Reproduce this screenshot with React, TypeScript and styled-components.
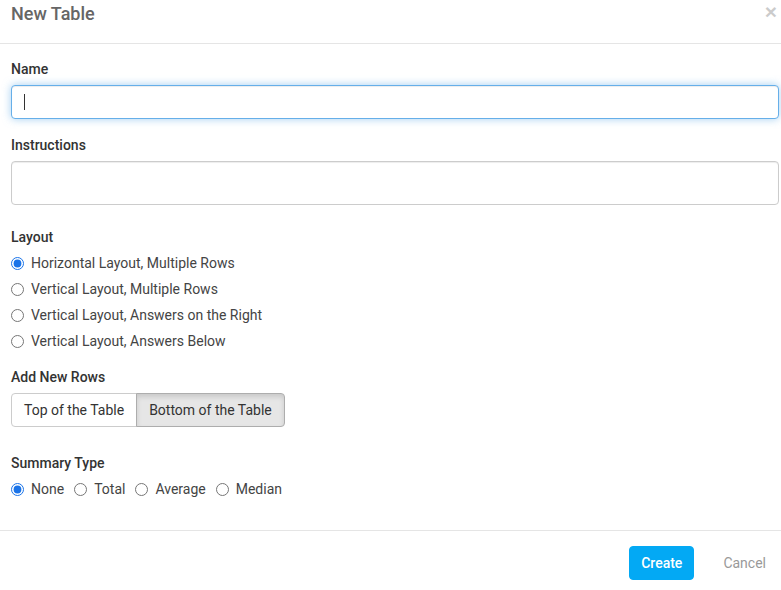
import React from "react";
import styled, { createGlobalStyle } from "styled-components";

const Global = createGlobalStyle`
  html, body { margin: 0; padding: 0; background: #fff; }
  body { font-family: Roboto, "Liberation Sans", Arial, sans-serif; font-size: 14px; color: #333; }
  * { box-sizing: border-box; }
`;

const Modal = styled.div`
  width: 781px;
  background: #fff;
`;

const Header = styled.div`
  height: 44px;
  border-bottom: 1px solid #e5e5e5;
  display: flex;
  align-items: flex-start;
  justify-content: space-between;
  padding: 3px 4px 0 11px;
`;

const Title = styled.h4`
  margin: 0;
  font-size: 18px;
  line-height: 22px;
  font-weight: 500;
  color: #666;
`;

const Close = styled.button`
  border: 0;
  background: transparent;
  padding: 0;
  margin: 0;
  font-family: "Liberation Sans", Arial, sans-serif;
  font-size: 21px;
  font-weight: 700;
  line-height: 18px;
  color: #000;
  opacity: 0.2;
  cursor: pointer;
`;

const Body = styled.div`
  padding: 15px 2px 0 11px;
  display: flex;
  flex-direction: column;
`;

const Label = styled.label<{ $gap?: number }>`
  display: block;
  font-weight: 500;
  font-size: 14px;
  line-height: 20px;
  color: #333;
  margin-top: ${(p) => p.$gap ?? 0}px;
`;

const InputWrap = styled.div`
  position: relative;
  margin-top: 6px;
`;

const TextInput = styled.input`
  display: block;
  width: 100%;
  height: 34px;
  padding: 6px 12px;
  font-family: inherit;
  font-size: 14px;
  color: #555;
  border: 1px solid #66afe9;
  border-radius: 4px;
  outline: 0;
  caret-color: transparent;
  box-shadow: inset 0 1px 1px rgba(0, 0, 0, 0.075), 0 0 8px rgba(102, 175, 233, 0.6);
`;

const Caret = styled.span`
  position: absolute;
  left: 13px;
  top: 9px;
  width: 1px;
  height: 16px;
  background: #333;
`;

const TextArea = styled.textarea`
  display: block;
  width: 100%;
  height: 44px;
  margin-top: 6px;
  padding: 6px 12px;
  font-family: inherit;
  font-size: 14px;
  border: 1px solid #ccc;
  border-radius: 4px;
  resize: none;
  outline: 0;
  box-shadow: inset 0 1px 1px rgba(0, 0, 0, 0.075);
`;

const RadioList = styled.div`
  display: flex;
  flex-direction: column;
  margin-top: 3px;
`;

const RadioRow = styled.div`
  display: flex;
  align-items: center;
  margin-top: 3px;
`;

const RadioLabel = styled.label<{ $inline?: boolean }>`
  display: flex;
  align-items: center;
  height: 26px;
  font-size: 14px;
  color: #444;
  margin-right: ${(p) => (p.$inline ? 10 : 0)}px;
  cursor: pointer;
`;

const Radio = styled.input`
  width: 13px;
  height: 13px;
  margin: 0 7px 0 0;
  accent-color: #1a73e8;
`;

const ButtonGroup = styled.div`
  display: flex;
  margin-top: 6px;
`;

const GroupButton = styled.button<{ $active?: boolean; $first?: boolean }>`
  height: 34px;
  padding: 6px 12px;
  font-family: inherit;
  font-size: 14px;
  color: #333;
  background: ${(p) => (p.$active ? "#e6e6e6" : "#fff")};
  border: 1px solid ${(p) => (p.$active ? "#adadad" : "#ccc")};
  border-radius: ${(p) => (p.$first ? "4px 0 0 4px" : "0 4px 4px 0")};
  margin-left: ${(p) => (p.$first ? 0 : -1)}px;
  box-shadow: ${(p) => (p.$active ? "inset 0 3px 5px rgba(0,0,0,.125)" : "none")};
  cursor: pointer;
`;

const Footer = styled.div`
  margin-top: 28px;
  border-top: 1px solid #e5e5e5;
  padding: 15px 3px 15px 11px;
  display: flex;
  justify-content: flex-end;
  gap: 17px;
`;

const PrimaryButton = styled.button`
  height: 34px;
  padding: 6px 11px;
  font-family: inherit;
  font-size: 14px;
  font-weight: 500;
  color: #fff;
  background: #03a9f4;
  border: 1px solid #03a9f4;
  border-radius: 4px;
  cursor: pointer;
`;

const LinkButton = styled.button`
  height: 34px;
  padding: 6px 12px;
  font-family: inherit;
  font-size: 14px;
  color: #999;
  background: transparent;
  border: 0;
  cursor: pointer;
`;

const layouts = [
  "Horizontal Layout, Multiple Rows",
  "Vertical Layout, Multiple Rows",
  "Vertical Layout, Answers on the Right",
  "Vertical Layout, Answers Below",
];

const summaries = ["None", "Total", "Average", "Median"];

export default function App() {
  return (
    <Modal>
      <Global />
      <Header>
        <Title>New Table</Title>
        <Close aria-label="Close">×</Close>
      </Header>
      <Body>
        <Label>Name</Label>
        <InputWrap>
          <TextInput type="text" defaultValue="" />
          <Caret />
        </InputWrap>

        <Label $gap={16}>Instructions</Label>
        <TextArea />

        <Label $gap={22}>Layout</Label>
        <RadioList>
          {layouts.map((l, i) => (
            <RadioLabel key={l}>
              <Radio type="radio" name="layout" defaultChecked={i === 0} />
              {l}
            </RadioLabel>
          ))}
        </RadioList>

        <Label $gap={13}>Add New Rows</Label>
        <ButtonGroup>
          <GroupButton $first>Top of the Table</GroupButton>
          <GroupButton $active>Bottom of the Table</GroupButton>
        </ButtonGroup>

        <Label $gap={26}>Summary Type</Label>
        <RadioRow>
          {summaries.map((s, i) => (
            <RadioLabel key={s} $inline>
              <Radio type="radio" name="summary" defaultChecked={i === 0} />
              {s}
            </RadioLabel>
          ))}
        </RadioRow>
      </Body>
      <Footer>
        <PrimaryButton>Create</PrimaryButton>
        <LinkButton>Cancel</LinkButton>
      </Footer>
    </Modal>
  );
}
